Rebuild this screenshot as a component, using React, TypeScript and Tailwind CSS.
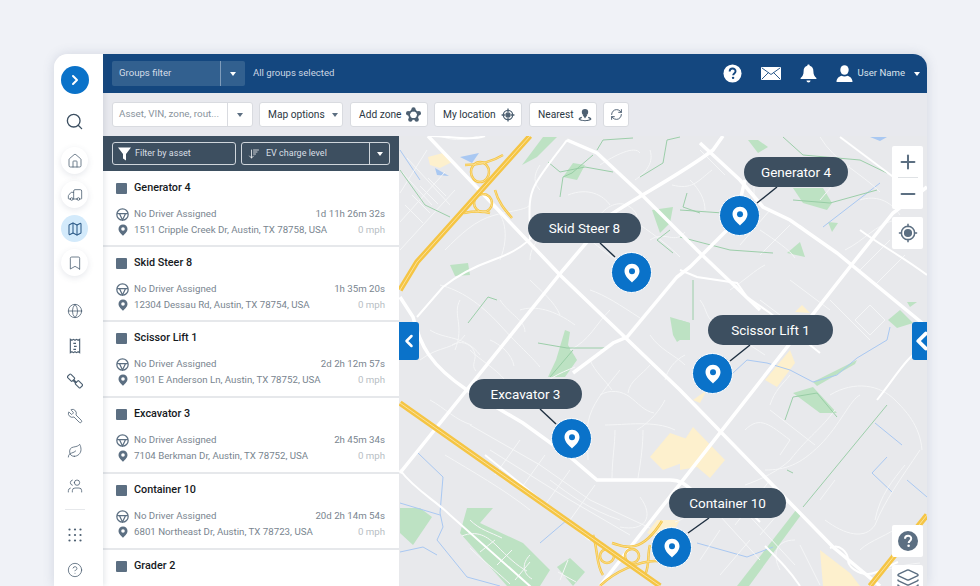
import React from "react";
import { ArrowDownWideNarrow, Bookmark, ChevronLeft, ChevronRight, CircleHelp, Globe, Home, Layers, Leaf, Map as MapIcon, Minus, Plus, RefreshCw, Search, Truck, Users, Wrench } from "lucide-react";

const Caret = ({ c = "border-t-white" }: { c?: string }) => (
  <span className={`inline-block w-0 h-0 border-l-[3.5px] border-r-[3.5px] border-t-[4px] border-l-transparent border-r-transparent ${c}`} />
);

const Pin = ({ size = 12, color = "#5c6f82", hole = "#fff" }: { size?: number; color?: string; hole?: string }) => (
  <svg width={size} height={size} viewBox="0 0 24 24"><path fill={color} d="M12 1C6.800 1 3 5 3 10c0 6 6.500 11 9 13.500C14.500 21 21 16 21 10c0-5-3.800-9-9-9z" /><circle cx="12" cy="10" r="3.600" fill={hole} /></svg>
);

const Wheel = () => (
  <svg width="13" height="13" viewBox="0 0 24 24" fill="none" stroke="#5c6f82" strokeWidth="2.300"><circle cx="12" cy="12" r="10.500" /><path d="M2 10.500h20M6.500 10.500L12 22l5.500-11.500" /></svg>
);

const SideBtn = ({ children, active }: { children: React.ReactNode; active?: boolean }) => (
  <div className={`w-[27px] h-[27px] rounded-full flex items-center justify-center ${active ? "bg-[#d3eafb]" : "bg-white shadow-[0_2px_6px_rgba(60,80,110,0.13)]"}`}>{children}</div>
);

const ic = { size: 16, strokeWidth: 1.2, color: "#4d6072" };

const Sidebar = () => (
  <div className="w-[49px] shrink-0 bg-white flex flex-col items-center pr-[8px] shadow-[2px_0_5px_rgba(60,80,110,0.12)] z-10">
    <div className="mt-[12px] w-[28px] h-[28px] rounded-full bg-[#0a72c9] flex items-center justify-center shrink-0"><ChevronRight size={16} strokeWidth={3} color="#fff" /></div>
    <div className="mt-[17px] h-[20px] flex items-center"><Search size={19} strokeWidth={1.700} color="#3d5062" /></div>
    <div className="mt-[16px] flex flex-col gap-[7px]">
      <SideBtn><Home {...ic} /></SideBtn>
      <SideBtn><Truck {...ic} className="-scale-x-100" /></SideBtn>
      <SideBtn active><MapIcon {...ic} color="#2f5d8a" strokeWidth={1.600} /></SideBtn>
      <SideBtn><Bookmark {...ic} /></SideBtn>
    </div>
    <div className="mt-[27px] flex flex-col items-center gap-[19px]">
      <Globe {...ic} />
      <svg width="16" height="16" viewBox="0 0 24 24" fill="none" stroke="#4d6072" strokeWidth="1.700"><path d="M5 2l2.300 1.500L9.700 2 12 3.500 14.300 2l2.400 1.500L19 2v20l-2.300-1.500-2.400 1.500-2.300-1.500L9.700 22l-2.400-1.500L5 22z" /><path d="M13.500 8H9.500M14.500 12.500h-4M13.500 17h-4" /></svg>
      <svg width="16" height="16" viewBox="0 0 24 24" fill="none" stroke="#4d6072" strokeWidth="1.700"><rect x="1" y="3.500" width="10" height="7" rx="1.500" transform="rotate(45 6 7)" /><rect x="13" y="13.500" width="10" height="7" rx="1.500" transform="rotate(45 18 17)" /><path d="M9.500 10.500l4.500 4.500" strokeWidth="3.500" /></svg>
      <Wrench {...ic} className="-scale-x-100" />
      <Leaf {...ic} />
      <Users {...ic} className="-scale-x-100" />
    </div>
    <div className="mt-[15px] w-[20px] h-[1px] bg-[#e6e8eb]" />
    <svg className="mt-[18px]" width="14" height="14" viewBox="0 0 14 14" fill="#4d6072">
      {[1.500, 7, 12.500].flatMap((y) => [1.500, 7, 12.500].map((x) => <circle key={`${x}-${y}`} cx={x} cy={y} r="1.100" />))}
    </svg>
    <div className="mt-[20px]"><CircleHelp size={16} strokeWidth={1.200} color="#4d6072" /></div>
  </div>
);

const Header = () => (
  <div className="h-[39px] shrink-0 bg-[#14477f] flex items-center pl-[9px] pr-[7px] text-[9.600px]">
    <div className="w-[133px] h-[25px] bg-[#32608f] rounded-[2px] flex items-center text-[#d5dde8]">
      <span className="flex-1 pl-[7px]">Groups filter</span>
      <span className="w-[25px] h-full border-l border-[#7f9cbb] flex items-center justify-center"><Caret /></span>
    </div>
    <span className="ml-[8px] text-[#ccd6e3]">All groups selected</span>
    <div className="ml-auto flex items-center">
      <svg width="19" height="19" viewBox="0 0 20 20"><circle cx="10" cy="10" r="9.500" fill="#fff" /><path d="M7 7.800c0-4 6.200-4 6.200-.2 0 2.400-2.500 2.300-2.500 4.300" fill="none" stroke="#14477f" strokeWidth="2" /><circle cx="10.600" cy="14.600" r="1.300" fill="#14477f" /></svg>
      <svg className="ml-[19px]" width="20" height="13" viewBox="0 0 20 13"><rect width="20" height="13" rx="1" fill="#fff" /><path d="M1 1l9 6.500L19 1M1 12l6.500-6.500M19 12l-6.500-6.500" fill="none" stroke="#14477f" strokeWidth="0.900" /></svg>
      <svg className="ml-[19px]" width="17" height="19" viewBox="0 0 17 19" fill="#fff"><path d="M8.500 0.500c.8 0 1.200.5 1.200 1.300 2.600.6 3.700 2.800 3.700 5.400 0 3.500 1 5 3 6.800v1H.600v-1c2-1.800 3-3.300 3-6.800 0-2.600 1.100-4.800 3.700-5.400 0-.8.400-1.300 1.200-1.300z" /><path d="M6.500 16.500h4c0 2.600-4 2.600-4 0z" /></svg>
      <svg className="ml-[19px]" width="17" height="17" viewBox="0 0 17 17" fill="#fff"><ellipse cx="8.500" cy="5" rx="4.200" ry="4.800" /><path d="M0.500 17c0-4 3-5.500 5-6.200 1.800 1 4.200 1 6 0 2 .7 5 2.200 5 6.200z" /></svg>
      <span className="ml-[5px] text-[#dbe3ec]">User Name</span>
      <span className="ml-[9px] flex"><Caret /></span>
    </div>
  </div>
);

const Tool = ({ children, className = "" }: { children: React.ReactNode; className?: string }) => (
  <div className={`h-[25px] bg-white border border-[#d9dbe0] rounded-[3px] flex items-center text-[10.200px] text-[#2b3844] ${className}`}>{children}</div>
);

const Toolbar = () => (
  <div className="h-[43px] shrink-0 bg-[#e8e9ee] flex items-center pl-[9px]">
    <Tool className="w-[141px]">
      <span className="w-[114px] pl-[6px] text-[9.800px] text-[#8a949d] whitespace-nowrap">Asset, VIN, zone, rout...</span>
      <span className="flex-1 h-full border-l border-[#d9dbe0] flex items-center justify-center"><Caret c="border-t-[#5c6f82]" /></span>
    </Tool>
    <Tool className="ml-[6px] w-[84px] pl-[8px] gap-[7px]">Map options <Caret c="border-t-[#5c6f82]" /></Tool>
    <Tool className="ml-[7px] w-[78px] pl-[8px] gap-[5px]">Add zone
      <svg width="15" height="15" viewBox="0 0 24 24" fill="none" stroke="#4d6072" strokeWidth="3"><path d="M12 4l8 6-3 9H7l-3-9z" /><g fill="#4d6072" stroke="none"><circle cx="12" cy="4" r="3.500" /><circle cx="20.500" cy="10" r="3.500" /><circle cx="17" cy="20" r="3.500" /><circle cx="7" cy="20" r="3.500" /><circle cx="3.500" cy="10" r="3.500" /></g></svg>
    </Tool>
    <Tool className="ml-[6px] w-[88px] pl-[8px] gap-[5px]">My location
      <svg width="14" height="14" viewBox="0 0 24 24" fill="none" stroke="#4d6072" strokeWidth="2.200"><circle cx="12" cy="12" r="8" /><circle cx="12" cy="12" r="3.500" fill="#4d6072" /><path d="M12 1v6M12 17v6M1 12h6M17 12h6" /></svg>
    </Tool>
    <Tool className="ml-[7px] w-[68px] pl-[8px] gap-[4px]">Nearest
      <svg width="14" height="14" viewBox="0 0 24 24" fill="#4d6072"><circle cx="12" cy="7" r="5.500" /><path d="M8 12h8l-4 6z" /><path d="M6 15C3 16 1 17.500 1 19c0 2 5 3.500 11 3.500S23 21 23 19c0-1.500-2-3-5-4l-1 2c2 .5 3 1.300 3 2 0 1-3.500 1.800-8 1.800S4 20 4 19c0-.7 1-1.500 3-2z" /></svg>
    </Tool>
    <Tool className="ml-[6px] w-[26px] justify-center"><RefreshCw size={13} strokeWidth={1.800} color="#4d6072" /></Tool>
  </div>
);

const rows = [
  { t: "Generator 4", time: "1d 11h 26m 32s", a: "1511 Cripple Creek Dr, Austin, TX 78758, USA", h: "h-[75px]" },
  { t: "Skid Steer 8", time: "1h 35m 20s", a: "12304 Dessau Rd, Austin, TX 78754, USA", h: "h-[75px]" },
  { t: "Scissor Lift 1", time: "2d 2h 12m 57s", a: "1901 E Anderson Ln, Austin, TX 78752, USA", h: "h-[76px]" },
  { t: "Excavator 3", time: "2h 45m 34s", a: "7104 Berkman Dr, Austin, TX 78752, USA", h: "h-[76px]" },
  { t: "Container 10", time: "20d 2h 14m 54s", a: "6801 Northeast Dr, Austin, TX 78723, USA", h: "h-[76px]" },
];

const Row = ({ t, time, a, h }: { t: string; time?: string; a?: string; h: string }) => (
  <div className={`${h} shrink-0 border-b-2 border-[#e6e8eb] pl-[13px] pr-[14px] pt-[10px]`}>
    <div className="flex items-center h-[12px]">
      <span className="w-[11px] h-[11px] bg-[#5c6f82] rounded-[1px]" />
      <span className="ml-[7px] text-[10.800px] font-medium text-[#15191d]">{t}</span>
    </div>
    {time && (
      <div className="mt-[12px] text-[9.700px] leading-[16px]">
        <div className="flex items-center text-[#79858f]"><span className="w-[18px] flex"><Wheel /></span>No Driver Assigned<span className="ml-auto">{time}</span></div>
        <div className="flex items-center text-[#79858f]"><span className="w-[18px] pl-[0.5px] flex"><Pin /></span>{a}<span className="ml-auto text-[#b8bec4]">0 mph</span></div>
      </div>
    )}
  </div>
);

const List = () => (
  <div className="w-[296px] shrink-0 flex flex-col bg-white overflow-hidden">
    <div className="h-[35px] shrink-0 bg-[#3d4f60] flex items-center pl-[9px] gap-[5px] text-[9px] text-[#d9dfe5]">
      <div className="w-[124px] h-[23px] border border-[#d0d6dc] rounded-[3px] flex items-center pl-[4px]">
        <svg width="15" height="15" viewBox="0 0 15 15" fill="#fff"><path d="M1 1.500h13L9 8v6.500L6 12.500V8z" /></svg>
        <span className="ml-[3px]">Filter by asset</span>
      </div>
      <div className="w-[149px] h-[23px] border border-[#d0d6dc] rounded-[3px] flex items-center pl-[6px]">
        <ArrowDownWideNarrow size={12} strokeWidth={1.500} color="#fff" />
        <span className="ml-[6px] flex-1">EV charge level</span>
        <span className="w-[20px] h-full border-l border-[#d0d6dc] flex items-center justify-center"><Caret /></span>
      </div>
    </div>
    <div className="h-[1px] shrink-0" />
    {rows.map((r) => <Row key={r.t} {...r} />)}
    <Row t="Grader 2" h="h-[40px]" />
  </div>
);

const minor = [
  "M400 193L427 150","M400 222L445 172","M400 250L455 190","M407 158L450 205","M400 170L432 205","M405 205l18 18","M412 195l18 18","M420 186l18 18","M428 178l18 18",
  "M440 136c15 6 30 4 42-2","M490 205c15 8 20 30 10 55","M445 250c15-15 30-30 50-35s30-5 35-10","M540 165c-8 12-5 20 0 25","M560 215c-8 12-30 25-30 45","M568 195c20-8 35 0 42 10",
  "M600 215c8-10 20-15 30-8s8 15 2 20","M590 240c10 8 20 16 30 22","M650 150c5 15-8 25-15 30","M600 165c15-10 35-20 40-12","M690 180c10 10 15 20 15 30","M650 240c15-10 25 5 35-8","M640 225c15 10 30 22 40 32",
  "M440 285c20 5 40 18 60 40s30 30 40 42","M460 300c-8 15 5 25-5 50","M500 300c10 15 25 20 25 32","M430 330c15 10 35 5 50 25","M420 360c20-15 35-10 45-25","M470 350c10 10 25 18 35 30",
  "M520 310c15-5 35 0 55 15","M530 280c10 10 25 22 30 35","M590 290c15 5 30 15 50 28","M610 310c-15 15-20 30-40 40","M590 360c5 12 15 20 22 30","M620 370c-12 15-25 30-30 45s-2 30-2 45","M650 335c10 15 25 20 35 30",
  "M605 425c20 0 50-5 70 5","M615 430c0 15-3 30-3 48","M643 430c0 15-2 30-5 48","M470 425l70 40 50 35 60 28","M490 450l80 50 60 35","M520 440l-25 35M545 455l-25 35M570 470l-25 35M595 485l-25 35",
  "M640 497c15 20 5 35-20 30","M620 520c-30-10-50-25-70-40","M690 497c0 15 0 20-15 25",
  "M700 150l25 25M712 170c-15 12-20 20-40 15","M760 230c15 10 30 20 35 28","M770 210l-30 35M790 225l-30 30","M750 170c8 15 0 30 8 40","M820 137c15 25 40 35 60 55","M850 165l-30 35M800 225l30 25","M860 200c15-5 30 0 40 15","M845 250c20-10 30-25 50-30","M860 270l30-30M875 285l30-30",
  "M760 300l40 30M790 280l40 30M830 300l40 40","M855 320l15-15 15 15-15 15z","M730 290c15-10 25-20 35-25","M720 330c15 5 30 15 45 25",
  "M790 375c-8 10-15 15-20 30M835 410c-15 20-25 25-45 50c-10 10-30 20-45 25","M770 410l45 35M830 395c25-15 50-10 65 5c10 10 25 25 27 50","M860 395c-10 5-20 30-40 50s-35 25-55 25","M745 430c15-15 25-5 45 10l-10 15","M920 450c-20 30-35 50-45 75c-10 15-30 10-50-5","M820 500l15-20M905 465c-12 15-25 30-30 55",
  "M730 495l65 70M710 505l50 55M770 480l-35 45M790 500l-30 35","M700 560l20-30M720 575l30-35M780 570c-8-15-5-30 15-30","M800 545l20 40","M870 575c15-5 30-10 50-12","M900 525c-10 10-30 15-40 25",
  "M462 536c15-6 25 0 35 10s20 20 30 25","M470 520c10 10 20 12 32 18M480 552l15-12M497 565l15-15M515 580l15-18M470 548c10 10 25 22 40 36","M530 555c-8 8-8 18 2 24M558 572l18 10M568 560l-8 20",
  "M452 345c8-5 18-2 22 6s-4 14 2 20","M490 340c10 4 22 14 24 26","M535 395c8-15 25-22 40-28","M600 395c10-6 22-4 30 2s14 14 24 16","M650 365c-8 10-20 15-22 28","M665 400c-5 10-15 22-28 30","M685 355c-10 5-18 15-20 25","M430 400c15 8 25 20 42 25","M445 455c25 15 60 35 85 55","M700 300c8 10 5 20 18 24",
];

const secondary = [
  "M530 240c0-25-3-40 5-55s25-35 32-45","M417 317l26-30c15-12 30-20 50-27s35-15 55-40","M840 137l60 45","M860 230c20 15 40 25 67 45","M680 270l17 7 40 6 10 14 23 16 50 40","M700 497c20-15 40 5 60 25",
  "M927 345c-20 10-30 30-50 55","M800 586c-10-15-20-25-35-40","M590 540l-105-85","M400 470c15 20 35 30 50 45l135 120","M430 136c20 0 40 5 55 0","M830 548c10-5 18 5 18 12s10 14 20 14 20-8 30-12",
];

const main = [
  "M428 136L560 275L680 390L833 547L880 586","M567 140L597 153L640 193L700 253L760 310","M700 143L740 180L763 207L790 220L837 253L927 327",
  "M400 473L563 270L610 215C640 195 680 175 713 150L723 136","M600 586L853 263L893 213L927 187","M573 373L613 343L627 337L677 277L690 267L735 222L745 180",
  "M400 297L413 317C420 345 430 365 467 390L523 423L570 457L597 480L670 480C685 480 690 490 700 497",
];

const yellowLines = ["M400 290L417 262L530 136","M400 403L660 586","M870 586L927 515"];
const ramps = [
  "M471 172a9 10 0 1 0 18 0a9 10 0 1 0-18 0","M474 203a9 9 0 1 0 18 0a9 9 0 1 0-18 0","M465 165c10 0 25-2 38-10","M464 213c10-2 18-2 26 0","M495 190c3 12 10 20 17 28",
  "M600 556a7 7 0 1 0 14 0a7 7 0 1 0-14 0","M625 556a7 7 0 1 0 14 0a7 7 0 1 0-14 0","M593 535c5 15 3 30 10 40","M612 543c15 5 30 10 50-22","M600 586c15-15 40-25 55-25s5 0 12 5","M650 545c-3 10 0 20-5 30",
];

const Terrain = () => (
  <svg className="absolute inset-0 blur-[0.3px]" width="528" height="450" viewBox="399 136 528 450">
    <rect x="399" y="136" width="528" height="450" fill="#e8e9ec" />
    <g fill="#fdf0cd">
      <path d="M428 157l15-4 9 9-12 6-10-3z" /><path d="M650 457l20-24 20 7v20l-27 10z" /><path d="M765 380l25-30 5 13-18 24z" /><path d="M795 312l7-7 8 8z" />
      <path d="M680 447l13-20 32 33-15 18-13-11-17 3z" /><path d="M693 400l14-10-7 13z" /><path d="M820 550l30 23 10 13h-37z" /><path d="M657 520l-10 13 20 10 13-23z" />
    </g>
    <g fill="#bde2c3">
      <path d="M563 177l10-14 12 2-8 15z" /><path d="M522 165l21-28h14l-20 20z" /><path d="M652 210l21-3-3 16-10 10z" /><path d="M748 140h10l10 7-10 6z" />
      <path d="M793 188h30l9 15-5 7-24-7z" /><path d="M828 222l10 1-6 9z" /><path d="M787 253l13-11 5 15z" /><path d="M450 265l18-2 2 12-15 1z" />
      <path d="M565 330l5 2-2 13 9 15-12 17h-17l8-17z" /><path d="M670 317l20 6v10l-13 9-4-7z" /><path d="M680 320l10 3v17h-10z" /><path d="M793 393l20-6 24 26h-17z" /><path d="M813 382l44-22-2 4-38 22z" />
      <path d="M888 320l12-10 13 13-16 5z" /><path d="M907 302h10l-7 5z" /><path d="M400 508h20l12 9-19 28-13-12z" /><path d="M460 533l7-25h26l-13 15 43 20 27 27-10 16h-33z" /><path d="M557 567l13-9 15 14-12 14z" />
      <path d="M796 510l5 5-52 71h-12z" />
    </g>
    <g fill="#a9c8f2"><path d="M460 157l19-4-7 10z" /><path d="M435 168l14 8-12-1z" /><path d="M870 137h17l-7 4z" /></g>
    <g fill="none" stroke="#a9c8f2" strokeWidth="1">
      <path d="M418 453l25 24-3 36 3 14-6 13 30 37 33 9" /><path d="M400 503l40 12" /><path d="M400 552l23-5 14 8" /><path d="M567 520l-27 23" /><path d="M733 373l14-13 20 3 23 7 23 12 24-7 20-17 30-18 3-13" />
      <path d="M875 423l27 22" /><path d="M887 457l-15 16 20 19" /><path d="M907 480l20 17" /><path d="M697 543l50 14 26-10" /><path d="M823 227l57-44" /><path d="M400 150l20 30" />
    </g>
    <g fill="none" stroke="#f5f6f7" strokeWidth="1">{minor.map((d) => <path key={d} d={d} />)}</g>
    <g fill="none" stroke="#93cba1" strokeWidth="0.900" strokeLinejoin="round">
      <path d="M548 162l12 10 25-5 28 5" /><path d="M560 197l3-20 9-4 21-18" /><path d="M597 150l6-10 30-2" /><path d="M640 177l23-14 4-23 13-3" /><path d="M687 193l-4 14 17 6" /><path d="M670 230l-13 10 16 13" />
      <path d="M468 323l20-26 9 3" /><path d="M538 343l29 5h38" /><path d="M550 377l23-27" /><path d="M785 420l8-23 24-4 20 24" /><path d="M787 470l6 3" /><path d="M693 280v40" />
      <path d="M793 200l37 3 47-13" /><path d="M783 137l20 18 57 5 27 13" /><path d="M680 210l43 3" /><path d="M680 237l50 13 43 3" /><path d="M887 405l-84 102" />
      <path d="M400 170l25 35 25 12" />
    </g>
    <g fill="none" stroke="#fff" strokeWidth="2">{secondary.map((d) => <path key={d} d={d} />)}</g>
    <g fill="none" stroke="#fff" strokeWidth="3.500">{main.map((d) => <path key={d} d={d} />)}</g>
    <g fill="none" stroke="#f5c544" strokeWidth="2.500">{ramps.map((d) => <path key={d} d={d} />)}</g>
    <g fill="none" stroke="#fbe29b" strokeWidth="0.800">{ramps.map((d) => <path key={d} d={d} />)}</g>
    <g fill="none" stroke="#f5c544" strokeWidth="5.500">{yellowLines.map((d) => <path key={d} d={d} />)}</g>
    <g fill="none" stroke="#fbe29b" strokeWidth="1">{yellowLines.map((d) => <path key={d} d={d} />)}</g>
    <g stroke="#1e2f40" strokeWidth="1.400">
      <path d="M777 187l-20 16" /><path d="M600 243l15 14" /><path d="M750 345l-20 16" /><path d="M540 409l16 15" /><path d="M709 518l-21 15" />
    </g>
  </svg>
);

const Callout = ({ t, cls }: { t: string; cls: string }) => (
  <div className={`absolute h-[30px] rounded-[15px] bg-[#3d4f60] text-white text-[13.500px] flex items-center justify-center ${cls}`}>{t}</div>
);

const Marker = ({ cls }: { cls: string }) => (
  <div className={`absolute w-[41px] h-[41px] rounded-full bg-[#0a72c9] border border-white flex items-center justify-center ${cls}`}>
    <Pin size={20} color="#fff" hole="#0a72c9" />
  </div>
);

const CtlBox = ({ children, cls }: { children: React.ReactNode; cls: string }) => (
  <div className={`absolute left-[493px] w-[31px] bg-white rounded-[2px] flex flex-col items-center justify-center ${cls}`}>{children}</div>
);

const MapPane = () => (
  <div className="relative flex-1 overflow-hidden">
    <Terrain />
    <Callout t="Generator 4" cls="left-[345px] top-[21px] w-[104px]" />
    <Callout t="Skid Steer 8" cls="left-[129px] top-[77px] w-[113px]" />
    <Callout t="Scissor Lift 1" cls="left-[309px] top-[179px] w-[125px]" />
    <Callout t="Excavator 3" cls="left-[70px] top-[243px] w-[113px]" />
    <Callout t="Container 10" cls="left-[270px] top-[352px] w-[117px]" />
    <Marker cls="left-[320px] top-[59px]" />
    <Marker cls="left-[212px] top-[116px]" />
    <Marker cls="left-[293px] top-[217px]" />
    <Marker cls="left-[152px] top-[282px]" />
    <Marker cls="left-[252px] top-[391px]" />
    <div className="absolute left-0 top-[186px] w-[20px] h-[38px] bg-[#0a72c9] rounded-r-[3px] flex items-center justify-center"><ChevronLeft size={26} strokeWidth={3} color="#fff" /></div>
    <div className="absolute right-0 top-[186px] w-[15px] h-[38px] bg-[#0a72c9] rounded-l-[3px] overflow-hidden flex items-center"><ChevronLeft className="shrink-0 -ml-[5px]" size={30} strokeWidth={3} color="#fff" /></div>
    <CtlBox cls="top-[10px] h-[63px] justify-start">
      <div className="h-[31px] flex items-center"><Plus size={22} strokeWidth={2.200} color="#5c6f82" /></div>
      <div className="w-[20px] h-[1px] bg-[#dfe2e5]" />
      <div className="h-[31px] flex items-center"><Minus size={22} strokeWidth={2.200} color="#5c6f82" /></div>
    </CtlBox>
    <CtlBox cls="top-[81px] h-[32px]">
      <svg width="20" height="20" viewBox="0 0 24 24" fill="none" stroke="#5c6f82" strokeWidth="1.800"><circle cx="12" cy="12" r="8" /><circle cx="12" cy="12" r="4" fill="#5c6f82" /><path d="M12 1v4M12 19v4M1 12h4M19 12h4" /></svg>
    </CtlBox>
    <CtlBox cls="top-[389px] h-[32px]">
      <svg width="20" height="20" viewBox="0 0 20 20"><circle cx="10" cy="10" r="10" fill="#5c6f82" /><path d="M7 7.800c0-4 6.200-4 6.200-.2 0 2.400-2.500 2.300-2.500 4.300" fill="none" stroke="#fff" strokeWidth="2" /><circle cx="10.600" cy="14.800" r="1.300" fill="#fff" /></svg>
    </CtlBox>
    <CtlBox cls="top-[429px] h-[32px] justify-start pt-[3px]"><Layers size={24} strokeWidth={1.500} color="#5c6f82" /></CtlBox>
  </div>
);

export default function App() {
  return (
    <div className="w-[980px] h-[586px] overflow-hidden bg-[#f0f2f7] pl-[54px] pr-[53px] pt-[54px] font-['Roboto',sans-serif]">
      <div className="h-[532px] flex rounded-t-[14px] overflow-hidden bg-white shadow-[0_0_12px_rgba(70,90,130,0.18)]">
        <Sidebar />
        <div className="flex-1 flex flex-col min-w-0">
          <Header />
          <Toolbar />
          <div className="flex-1 flex min-h-0">
            <List />
            <MapPane />
          </div>
        </div>
      </div>
    </div>
  );
}
